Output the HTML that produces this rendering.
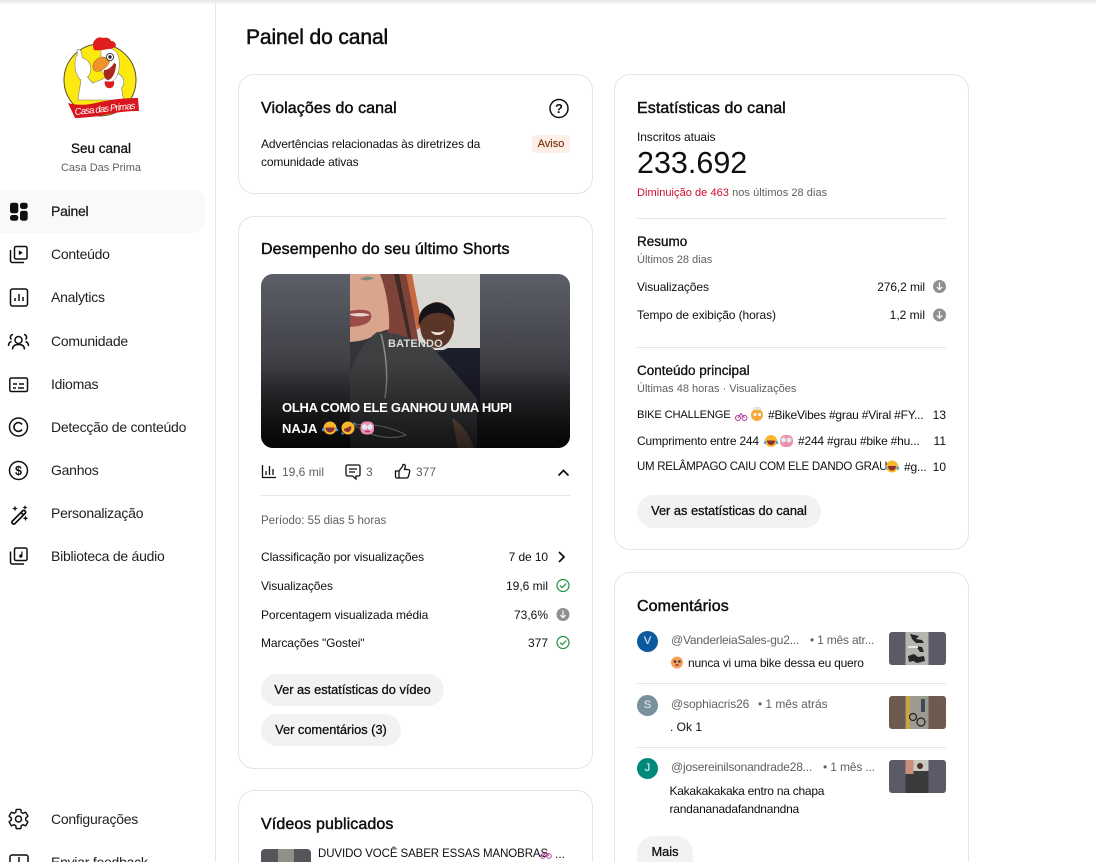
<!DOCTYPE html>
<html lang="pt"><head><meta charset="utf-8"><title>Painel do canal</title>
<style>
html,body{margin:0;padding:0;background:#fff;overflow:hidden}
#p{position:relative;width:1096px;height:862px;overflow:hidden;background:#fff;font-family:"Liberation Sans",Arial,sans-serif;color:#0f0f0f}
#p div{position:absolute;box-sizing:border-box}
.t{white-space:nowrap;line-height:20px;height:20px;font-size:12px}
.n{font-size:14px;left:51px;color:#1f1f1f;letter-spacing:-.25px}
.m{-webkit-text-stroke:.3px currentColor}
.h{font-size:16px;-webkit-text-stroke:.45px currentColor;letter-spacing:.1px}
.g{color:#606060}
.s{font-size:11px;color:#606060}
.r{text-align:right}
.c{background:#fff;border:1px solid #e5e5e5;border-radius:16px}
.cb{border-bottom:0;border-radius:16px 16px 0 0}
.l{height:1px;background:#e5e5e5}
.b{background:#f2f2f2;text-align:center;font-size:12.8px;-webkit-text-stroke:.3px #0f0f0f;white-space:nowrap}
svg{position:absolute;left:0;top:0}
</style></head><body><div id="p">
<div style="left:0;top:0;width:1096px;height:4px;background:linear-gradient(#e6e6e6,#f8f8f8)"></div>
<div style="left:215px;top:4px;width:1px;height:858px;background:#e5e5e5"></div>
<div style="left:0;top:190px;width:205px;height:43px;background:#f9f9f9;border-radius:0 12px 12px 0"></div>

<div class="c" style="left:238px;top:74px;width:355px;height:120px"></div>
<div class="c" style="left:238px;top:216px;width:355px;height:553px"></div>
<div class="c cb" style="left:238px;top:790px;width:355px;height:72px"></div>
<div class="c" style="left:614px;top:74px;width:355px;height:476px"></div>
<div class="c cb" style="left:614px;top:572px;width:355px;height:290px"></div>

<div class="t" style="left:246px;top:27px;font-size:21px;height:22px;line-height:22px;-webkit-text-stroke:.5px #0f0f0f;letter-spacing:-.1px">Painel do canal</div>

<div class="t m" style="left:40px;width:122px;text-align:center;top:139px;font-size:13.5px">Seu canal</div>
<div class="t s" style="left:40px;width:122px;text-align:center;top:158px">Casa Das Prima</div>
<div class="t n m" style="top:201px">Painel</div>
<div class="t n" style="top:244px">Conteúdo</div>
<div class="t n" style="top:287px">Analytics</div>
<div class="t n" style="top:331px">Comunidade</div>
<div class="t n" style="top:374px">Idiomas</div>
<div class="t n" style="top:417px">Detecção de conteúdo</div>
<div class="t n" style="top:460px">Ganhos</div>
<div class="t n" style="top:503px">Personalização</div>
<div class="t n" style="top:546px">Biblioteca de áudio</div>
<div class="t n" style="top:809px">Configurações</div>
<div class="t n" style="top:852px;height:10px;overflow:hidden">Enviar feedback</div>

<div class="t h" style="left:261px;top:99px">Violações do canal</div>
<div class="t" style="left:261px;top:134px;letter-spacing:-.15px">Advertências relacionadas às diretrizes da</div>
<div class="t" style="left:261px;top:152px;letter-spacing:-.15px">comunidade ativas</div>
<div class="t" style="left:532px;top:135px;width:38px;height:18px;line-height:18px;background:#fdeee6;border-radius:4px;text-align:center;font-size:11px;color:#7a3413;-webkit-text-stroke:.15px #7a3413">Aviso</div>

<div class="t h" style="left:261px;top:240px">Desempenho do seu último Shorts</div>
<div class="t g" style="left:282px;top:462px">19,6 mil</div>
<div class="t g" style="left:366px;top:462px">3</div>
<div class="t g" style="left:416px;top:462px">377</div>
<div class="l" style="left:261px;top:495px;width:309px"></div>
<div class="t g" style="left:261px;top:511px;font-size:11.5px">Período: 55 dias 5 horas</div>
<div class="t" style="left:261px;top:547px;letter-spacing:-.1px">Classificação por visualizações</div>
<div class="t r" style="left:448px;width:100px;top:547px;letter-spacing:-.1px">7 de 10</div>
<div class="t" style="left:261px;top:576px;letter-spacing:-.1px">Visualizações</div>
<div class="t r" style="left:448px;width:100px;top:576px">19,6 mil</div>
<div class="t" style="left:261px;top:605px;letter-spacing:-.1px">Porcentagem visualizada média</div>
<div class="t r" style="left:448px;width:100px;top:605px">73,6%</div>
<div class="t" style="left:261px;top:633px;letter-spacing:-.1px">Marcações "Gostei"</div>
<div class="t r" style="left:448px;width:100px;top:633px">377</div>
<div class="b" style="left:261px;top:674px;width:183px;height:32px;line-height:31px;border-radius:16px">Ver as estatísticas do vídeo</div>
<div class="b" style="left:261px;top:714px;width:140px;height:32px;line-height:31px;border-radius:16px">Ver comentários (3)</div>
<div class="t h" style="left:261px;top:815px">Vídeos publicados</div>
<div style="left:261px;top:849px;width:50px;height:13px;background:#55565c;border-radius:4px 4px 0 0"></div>
<div style="left:278px;top:849px;width:16px;height:13px;background:#8f9184"></div>
<div class="t" style="left:318px;top:844px;font-size:11.5px;letter-spacing:-.1px">DUVIDO VOCÊ SABER ESSAS MANOBRAS</div>
<div class="t" style="left:555px;top:844px">...</div>

<div class="t h" style="left:637px;top:99px">Estatísticas do canal</div>
<div class="t" style="left:637px;top:127px;letter-spacing:-.1px">Inscritos atuais</div>
<div class="t" style="left:637px;top:145px;height:36px;line-height:36px;font-size:30.5px">233.692</div>
<div class="t" style="left:637px;top:182px;font-size:11px;color:#cc0b2f;letter-spacing:.05px;padding-top:1px">Diminuição de 463 <span style="color:#606060">nos últimos 28 dias</span></div>
<div class="l" style="left:637px;top:218px;width:309px"></div>
<div class="t m" style="left:637px;top:232px;font-size:13.5px">Resumo</div>
<div class="t s" style="left:637px;top:250px">Últimos 28 dias</div>
<div class="t" style="left:637px;top:277px;letter-spacing:-.1px">Visualizações</div>
<div class="t r" style="left:825px;width:100px;top:277px;letter-spacing:-.1px">276,2 mil</div>
<div class="t" style="left:637px;top:305px;letter-spacing:-.1px">Tempo de exibição (horas)</div>
<div class="t r" style="left:825px;width:100px;top:305px">1,2 mil</div>
<div class="l" style="left:637px;top:347px;width:309px"></div>
<div class="t m" style="left:637px;top:361px;font-size:13.5px">Conteúdo principal</div>
<div class="t s" style="left:637px;top:379px">Últimas 48 horas · Visualizações</div>
<div class="t" style="left:637px;top:405px;font-size:11.2px;letter-spacing:-.2px">BIKE CHALLENGE</div>
<div class="t" style="left:768px;top:405px;letter-spacing:-.2px">#BikeVibes #grau #Viral #FY...</div>
<div class="t r" style="left:906px;width:40px;top:405px">13</div>
<div class="t" style="left:637px;top:431px;letter-spacing:-.2px">Cumprimento entre 244</div>
<div class="t" style="left:798px;top:431px;letter-spacing:-.2px">#244 #grau #bike #hu...</div>
<div class="t r" style="left:906px;width:40px;top:431px">11</div>
<div class="t" style="left:637px;top:457px;font-size:11.5px;letter-spacing:-.27px">UM RELÂMPAGO CAIU COM ELE DANDO GRAU</div>
<div class="t" style="left:904px;top:457px;letter-spacing:-.2px">#g...</div>
<div class="t r" style="left:906px;width:40px;top:457px">10</div>
<div class="b" style="left:637px;top:495px;width:184px;height:33px;line-height:32px;border-radius:17px">Ver as estatísticas do canal</div>

<div class="t h" style="left:637px;top:597px">Comentários</div>
<div style="left:637px;top:631px;width:21px;height:21px;border-radius:50%;background:#0b5a9e;color:#c5d5e8;font-size:11px;line-height:21px;text-align:center;-webkit-text-stroke:.3px #c5d5e8">V</div>
<div class="t g" style="left:671px;top:630px;letter-spacing:-.2px">@VanderleiaSales-gu2...</div>
<div class="t g" style="left:810px;top:630px;letter-spacing:-.2px">• 1 mês atr...</div>
<div class="t" style="left:688px;top:653px;letter-spacing:-.22px">nunca vi uma bike dessa eu quero</div>
<div class="l" style="left:637px;top:683px;width:309px"></div>
<div style="left:637px;top:695px;width:21px;height:21px;border-radius:50%;background:#78909c;color:#d5dde2;font-size:11px;line-height:21px;text-align:center;-webkit-text-stroke:.3px #d5dde2">S</div>
<div class="t g" style="left:671px;top:694px;letter-spacing:-.1px">@sophiacris26</div>
<div class="t g" style="left:758px;top:694px;letter-spacing:-.05px">• 1 mês atrás</div>
<div class="t" style="left:670px;top:717px">. Ok 1</div>
<div class="l" style="left:637px;top:747px;width:309px"></div>
<div style="left:637px;top:758px;width:21px;height:21px;border-radius:50%;background:#00897b;color:#c5e3df;font-size:11px;line-height:21px;text-align:center;-webkit-text-stroke:.3px #c5e3df">J</div>
<div class="t g" style="left:671px;top:757px;letter-spacing:-.2px">@josereinilsonandrade28...</div>
<div class="t g" style="left:823px;top:757px;letter-spacing:-.15px">• 1 mês ...</div>
<div class="t" style="left:669.5px;top:781px;letter-spacing:-.25px">Kakakakakaka entro na chapa</div>
<div class="t" style="left:669.5px;top:799px;letter-spacing:-.22px">randananadafandnandna</div>
<div class="b" style="left:637px;top:836px;width:56px;height:26px;line-height:32px;border-radius:17px 17px 0 0">Mais</div>

<svg width="1096" height="862" viewBox="0 0 1096 862" style="pointer-events:none">
<defs>
<clipPath id="th"><rect x="261" y="274" width="309" height="174" rx="12"/></clipPath>
<linearGradient id="sd" x1="0" y1="0" x2="0" y2="1"><stop offset="0" stop-color="#5d5f68"/><stop offset=".55" stop-color="#3d3e43"/><stop offset="1" stop-color="#141416"/></linearGradient>
<linearGradient id="ov" x1="0" y1="0" x2="0" y2="1"><stop offset=".5" stop-color="#000" stop-opacity="0"/><stop offset="1" stop-color="#000" stop-opacity=".7"/></linearGradient>
</defs>
<!-- logo -->
<g>
<circle cx="100" cy="80" r="36" fill="#fde910" stroke="#55532a" stroke-width="1"/>
<path d="M77 50c2-1 4 0 4.500 3l1 5c4 1 7 3 8 8 1 4 0 8-3 11l5 6 8-3 16-8 5 4c4 4 2 10 0 12l2 12H78c1-8 2-14 3-20-3-2-6-8-6-14 0-5 0-8 2-11 1-2 0-3 0-5z" fill="#fff" stroke="#7b7b70" stroke-width=".6"/>
<path d="M101 50c6-3 13-2 16 3 3 6 3 14 1 20-1 5-5 9-9 9l-8-12z" fill="#fff" stroke="#77776c" stroke-width=".5"/>
<path d="M93 65c1-5 6-8 11-8l6 2c0 5-5 10-10 12-3 1-7 0-7-3z" fill="#f0932b" stroke="#9a5a18" stroke-width=".5"/>
<path d="M104 70c4 0 8-3 10-7l2 1c0 7-3 15-8 16-3 0-5-5-4-10z" fill="#a8281c"/>
<path d="M105 81c-1 2 0 6 3 7 4 1 7-2 6-7-3 1-6 1-9 0z" fill="#e01d1d"/>
<circle cx="110" cy="57" r="3.600" fill="#fff" stroke="#222" stroke-width=".8"/><circle cx="110" cy="57" r="1.700" fill="#222"/>
<path d="M94 50c-2-5-1-9 2-11 2-2 5-2 7-1 3-1 7 0 8 3 3 0 5 2 5 5-2 2-5 3-8 3-5 1-11 2-14 1z" fill="#e01e1e"/>
<path d="M68 103c12 3 20 2 32-1 14-3 25-4 38-4l1 13c-18 0-29 3-40 5-8 1-19 2-24 2z" fill="#d8161e"/>
<text x="75" y="115" font-family="Liberation Sans,sans-serif" font-style="italic" font-size="9.500" fill="#fff" textLength="61" transform="rotate(-6 75 115)">Casa das Primas</text>
</g>
<!-- nav icons -->
<g fill="#0f0f0f">
<rect x="10" y="202.700" width="8.300" height="10.600" rx="2.500"/><rect x="20" y="202.700" width="7.700" height="6.300" rx="2.500"/>
<rect x="10" y="215" width="8.300" height="5.700" rx="2.500"/><rect x="20" y="210.700" width="7.700" height="10" rx="2.500"/>
</g>
<g fill="none" stroke="#0f0f0f" stroke-width="1.500">
<rect x="14.500" y="246.500" width="12.500" height="12.500" rx="1.500"/><path d="M10.500 250v10.500a2 2 0 0 0 2 2H24"/>
<rect x="10.500" y="289" width="17" height="17" rx="2"/><path d="M15 301v-3M19 301v-7M23 301v-4"/>
<circle cx="18.500" cy="340" r="3.500"/><path d="M12.500 349.500c0-3.500 2.500-5 6-5s6 1.500 6 5"/><path d="M13 334.500a2.800 2.800 0 0 0-1.500 5M24 334.500a2.800 2.800 0 0 1 1.500 5M8.500 346c0-2.500 1-4 3-4.500M28.500 346c0-2.500-1-4-3-4.500"/>
<rect x="9.800" y="378" width="17.700" height="13.500" rx="1.500"/><path d="M13 384h4M19 384h5M13 388h3M18 388h6"/>
<circle cx="18.500" cy="427" r="9"/><path d="M22 424.500a4.400 4.400 0 1 0 0 5" stroke-width="1.600"/>
<circle cx="18.500" cy="470.500" r="9"/>
<rect x="14.500" y="548" width="12.500" height="12.500" rx="1.500"/><path d="M10.500 551.500V562a2 2 0 0 0 2 2H24"/>
<path d="M12 521.500l11-11a2 2 0 0 1 2.500 2.500l-11 11a2 2 0 0 1-2.500-2.500zM21 512.500l3 3" stroke-width="1.700"/>
<path transform="translate(7 807.500) scale(.96)" stroke-width="1.500" d="M19.430 12.980c.04-.32.07-.64.07-.98s-.03-.66-.07-.98l2.110-1.650c.19-.15.24-.42.12-.64l-2-3.460c-.12-.22-.39-.3-.61-.22l-2.490 1c-.52-.4-1.080-.73-1.690-.98l-.38-2.650C14.460 2.180 14.250 2 14 2h-4c-.25 0-.46.18-.49.42l-.38 2.650c-.61.25-1.170.59-1.690.98l-2.490-1c-.23-.09-.49 0-.61.22l-2 3.460c-.13.22-.07.49.12.64l2.110 1.650c-.04.32-.07.65-.07.98s.03.66.07.98l-2.110 1.650c-.19.15-.24.42-.12.64l2 3.460c.12.22.39.3.61.22l2.490-1c.52.4 1.080.73 1.690.98l.38 2.650c.03.24.24.42.49.42h4c.25 0 .46-.18.49-.42l.38-2.650c.61-.25 1.170-.59 1.690-.98l2.490 1c.23.09.49 0 .61-.22l2-3.460c.12-.22.07-.49-.12-.64l-2.110-1.650z"/>
<circle cx="18.500" cy="819" r="3"/>
<rect x="10" y="855" width="18" height="15" rx="2"/><path d="M19 857v6"/>
</g>
<path d="M18.800 250.200v5l4-2.500z" fill="#0f0f0f"/>
<path d="M22.500 551.500v4.500a1.700 1.700 0 1 1-1.200-1.600v-2.900z" fill="#0f0f0f"/>
<text x="18.500" y="475" text-anchor="middle" font-family="Liberation Sans,sans-serif" font-size="12.500" font-weight="bold" fill="#0f0f0f">$</text>
<path d="M15 505.500l.8 2.200 2.200.8-2.200.8-.8 2.200-.8-2.200-2.200-.8 2.200-.8zM25 505l.7 1.800 1.800.7-1.800.7-.7 1.800-.7-1.800-1.800-.7 1.800-.7zM25.500 515.500l.8 2 2 .8-2 .8-.8 2-.8-2-2-.8 2-.8z" fill="#0f0f0f"/>

<!-- card 1 help -->
<circle cx="559" cy="108.500" r="9" fill="none" stroke="#0f0f0f" stroke-width="1.500"/>
<text x="559" y="113" text-anchor="middle" font-family="Liberation Sans,sans-serif" font-size="13" font-weight="bold" fill="#0f0f0f">?</text>

<!-- thumbnail -->
<g clip-path="url(#th)">
<rect x="261" y="274" width="309" height="174" fill="url(#sd)"/>
<rect x="350" y="274" width="130" height="174" fill="#34343a"/>
<rect x="410" y="274" width="70" height="76" fill="#d9d8d2"/>
<path d="M380 274h27l12 70-30 0z" fill="#7d4238"/>
<path d="M394 274h5l13 68h-3z" fill="#3d2a24"/>
<path d="M406 274h6l10 52-5 4z" fill="#c6693e"/>
<path d="M350 274h30c7 18 10 40 9 55l-12 4c-5 5-13 8-27 9z" fill="#d9a58c"/>
<path d="M350 311c8-2 20-2 21 3 2 8-6 12-21 13z" fill="#9c4c46"/>
<path d="M350 314c6-1 15-2 20 1-6 2-14 2-20 0z" fill="#e9d3cb"/>
<path d="M360 279c5-3 9-3 14-1-4 3-9 3-14 1z" fill="#7e8a78"/>
<path d="M480 348h-32l-18 8 20 70 30 22z" fill="#1d1e2c"/>
<ellipse cx="437" cy="325" rx="17" ry="23" fill="#5a3628"/>
<path d="M419 326c-2-14 6-23 18-23 10 0 17 7 18 18-6-7-13-9-20-8-8 1-13 5-16 13z" fill="#16131a"/>
<path d="M431 331c5 2 10 2 14-1-1 6-12 7-14 1z" fill="#f2e6e0"/>
<path d="M350 372c5-15 16-32 27-40l20 2 33 11 20 22 27 32v49H350z" fill="#3f4042"/>
<path d="M381 334c4 15 8 40 4 64" stroke="#8a8c88" stroke-width="1.500" fill="none"/>
<path d="M452 418c10 5 18 18 22 30h-16c-2-10-4-22-6-30z" fill="#8a6a58"/>
<rect x="261" y="274" width="309" height="174" fill="url(#ov)"/>
<path d="M354 425c20-2 40 3 52 10-10 4-25 3-38-2z" fill="none" stroke="#5a5a5a" stroke-width="1"/>
</g>
<text x="388" y="347" font-family="Liberation Sans,sans-serif" font-size="11" font-weight="bold" letter-spacing=".3" fill="#dcdcdc" textLength="55">BATENDO</text>
<text x="282" y="412" font-family="Liberation Sans,sans-serif" font-size="13" font-weight="bold" fill="#fff" textLength="230">OLHA COMO ELE GANHOU UMA HUPI</text>
<text x="282" y="433" font-family="Liberation Sans,sans-serif" font-size="13" font-weight="bold" fill="#fff">NAJA</text>
<g><circle cx="330" cy="428" r="6.500" fill="#f9b52c"/><path d="M325.500 427.500h9c0 3-2 5-4.500 5s-4.500-2-4.500-5z" fill="#8a3030"/><path d="M324 428l-1.500 3M336 428l1.500 3" stroke="#4aa0e8" stroke-width="2"/></g>
<g><circle cx="348" cy="428" r="6.500" fill="#f9b52c"/><path d="M344 429l7-3c1 3-1 6-3 6s-4-1-4-3z" fill="#8a3030"/><path d="M343 433l-1 1M354 424l1-1" stroke="#4aa0e8" stroke-width="2.500"/></g>
<g><rect x="360.500" y="421.500" width="13.500" height="13" rx="5" fill="#ee8fae"/><circle cx="364.500" cy="427" r="2.700" fill="#dfeaf5"/><circle cx="370" cy="427" r="2.700" fill="#dfeaf5"/><path d="M365 431.500h5" stroke="#b2336b" stroke-width="1.500"/></g>

<!-- stats row icons -->
<g fill="none" stroke="#0f0f0f" stroke-width="1.300">
<path d="M262.500 465v12.500H276"/><path d="M266 475v-4M269.500 475v-9M273 475v-6"/>
<path d="M346 466.500a1.500 1.500 0 0 1 1.500-1.500h11a1.500 1.500 0 0 1 1.500 1.500v8a1.500 1.500 0 0 1-1.500 1.500h-2.500v3l-3.500-3h-5a1.500 1.500 0 0 1-1.500-1.500z"/><path d="M349 469h8M349 472h6"/>
<path d="M395.500 471h3.500v7h-2a1.500 1.500 0 0 1-1.500-1.500zM399 471l3.500-4.500.5-2c1.500-.5 2.800.8 2.300 2.500l-.8 2.500h3.500c1.300 0 2 1 1.700 2.200l-1.200 4.500c-.3 1-1 1.800-2.200 1.800H399"/>
</g>
<path d="M558.500 475.500l5-5 5 5" fill="none" stroke="#0f0f0f" stroke-width="1.700"/>
<path d="M559 552l5 5-5 5" fill="none" stroke="#0f0f0f" stroke-width="1.700"/>
<g fill="none" stroke="#1e8e3e" stroke-width="1.200"><circle cx="563" cy="585.500" r="6"/><path d="M560 585.500l2.200 2.200 4-4.200"/><circle cx="563" cy="642.500" r="6"/><path d="M560 642.500l2.200 2.200 4-4.200"/></g>
<g><circle cx="563" cy="614.500" r="6.500" fill="#909090"/><path d="M563 610.500v7M560.300 615l2.700 2.700 2.700-2.700" fill="none" stroke="#fff" stroke-width="1.200"/></g>
<g><circle cx="939.500" cy="286.500" r="6.500" fill="#909090"/><path d="M939.500 282.500v7M936.800 287l2.700 2.700 2.700-2.700" fill="none" stroke="#fff" stroke-width="1.200"/></g>
<g><circle cx="939.500" cy="315" r="6.500" fill="#909090"/><path d="M939.500 311v7M936.800 315.500l2.700 2.700 2.700-2.700" fill="none" stroke="#fff" stroke-width="1.200"/></g>

<!-- small emoji -->
<g fill="none" stroke="#b03a9a" stroke-width="1"><circle cx="738" cy="418" r="2.500"/><circle cx="744.500" cy="418" r="2.500"/><path d="M738 418l3-4.500 3.500 4.500"/></g>
<g><circle cx="757" cy="415" r="6" fill="#f5a93a"/><path d="M752 410h10l-2-3h-6z" fill="#e8e2dc"/><circle cx="755" cy="414.500" r="1.500" fill="#fff"/><circle cx="759.500" cy="414.500" r="1.500" fill="#fff"/></g>
<g><circle cx="771" cy="441" r="6" fill="#f9b52c"/><path d="M767 440.500h8c0 3-2 4.500-4 4.500s-4-1.500-4-4.500z" fill="#8a3030"/><path d="M765.500 441l-1 3M776.500 441l1 3" stroke="#4aa0e8" stroke-width="2"/></g>
<g><rect x="780" y="435" width="13" height="12" rx="5" fill="#ee8fae"/><circle cx="783.500" cy="440" r="2.500" fill="#dfeaf5"/><circle cx="789" cy="440" r="2.500" fill="#dfeaf5"/></g>
<g><circle cx="892" cy="466.500" r="6" fill="#f9b52c"/><path d="M888 466h8c0 3-2 4.500-4 4.500s-4-1.500-4-4.500z" fill="#8a3030"/><path d="M886.500 466.500l-1 3M897.500 466.500l1 3" stroke="#4aa0e8" stroke-width="2"/></g>
<g fill="none" stroke="#b03a9a" stroke-width=".9"><circle cx="543" cy="856" r="2.300"/><circle cx="549" cy="856" r="2.300"/><path d="M543 856l3-4 3 4"/></g>
<g><circle cx="677" cy="662.500" r="6" fill="#f5a05a"/><circle cx="675" cy="661.500" r="1.300" fill="#4a2a2a"/><circle cx="679.500" cy="661.500" r="1.300" fill="#4a2a2a"/><path d="M675.500 665h3" stroke="#7a2a2a" stroke-width="1.300"/></g>

<!-- comment thumbs -->
<g>
<rect x="889" y="632" width="57" height="33" rx="3" fill="#5a5b66"/><rect x="905.500" y="632" width="23" height="33" fill="#b5b5b0"/>
<path d="M910 634l9 2-3 3 6 1 2 3-8 0-4-4zM908 656l6-2 4 3 6-1 1 5-8 2-4-2-4 1zM916 646l6 1 2 5-4 0z" fill="#26262a"/><path d="M908 647h10" stroke="#e5e5e5" stroke-width="2"/>
<rect x="889" y="696" width="57" height="33" rx="3" fill="#6e5b50"/><rect x="905.500" y="696" width="23" height="33" fill="#9d9a8f"/>
<rect x="906.500" y="696" width="3" height="33" fill="#d9a52c"/><circle cx="913" cy="717" r="3.500" fill="none" stroke="#222" stroke-width="1.200"/><circle cx="921" cy="722" r="4" fill="none" stroke="#222" stroke-width="1.200"/><rect x="921" y="699" width="4" height="13" fill="#3c4a5c"/>
<rect x="889" y="760" width="57" height="33" rx="3" fill="#5a5b66"/><rect x="905.500" y="760" width="23" height="33" fill="#3a3a3c"/>
<rect x="905.500" y="760" width="8" height="14" fill="#c98e7c"/><rect x="913.500" y="760" width="15" height="11" fill="#c9c7c0"/><circle cx="920" cy="766" r="3" fill="#4c3026"/>
</g>
</svg>
</div></body></html>
